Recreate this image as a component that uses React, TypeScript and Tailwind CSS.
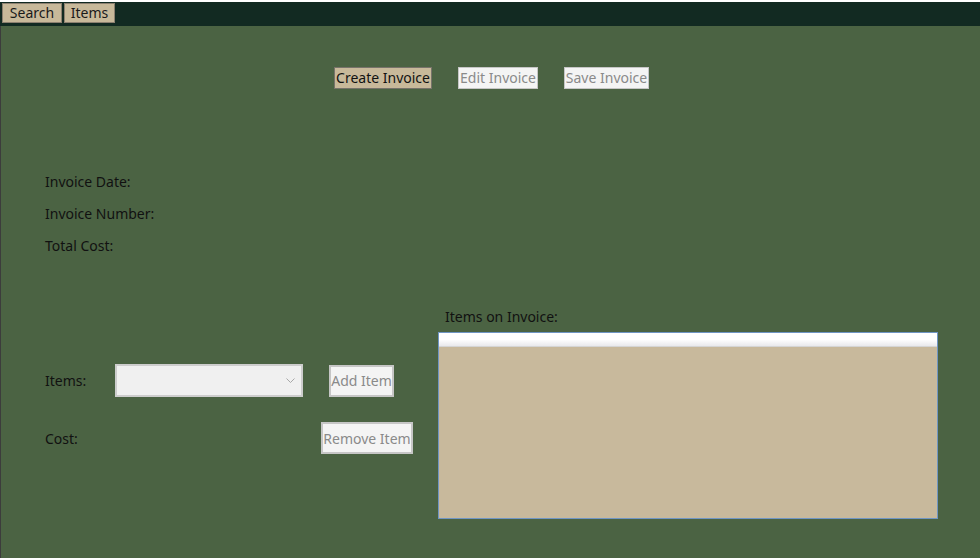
export default function App() {
  const font = { fontFamily: '"Segoe UI", "Noto Sans", "Open Sans", sans-serif' };
  return (
    <div
      className="w-[980px] h-[558px] bg-[#4b6343] overflow-hidden text-[14px] text-[#111111] flex flex-col"
      style={font}
    >
      {/* top menu strip */}
      <div className="h-[26px] border-t-2 border-white bg-[#122a22] flex items-start gap-[2px] pt-px pl-[2px]">
        <button className="h-[20px] w-[60px] bg-[#c8b99a] border border-[#8c8070] leading-[18px] text-[#1a1a1a]">
          Search
        </button>
        <button className="h-[20px] w-[51px] bg-[#c8b99a] border border-[#8c8070] leading-[18px] text-[#1a1a1a]">
          Items
        </button>
      </div>

      <div className="flex-1 border-l border-[#3c3c3c] flex flex-col">
        {/* invoice actions */}
        <div className="mt-[41px] flex pl-[333px]">
          <button className="h-[22px] w-[98px] bg-[#c8b99a] border border-[#77736a] leading-[20px] text-[#111111]">
            Create Invoice
          </button>
          <button className="ml-[26px] h-[22px] w-[80px] bg-[#f4f4f4] border border-[#c6c6c6] leading-[20px] text-[#8a8a8a]">
            Edit Invoice
          </button>
          <button className="ml-[26px] h-[22px] w-[85px] bg-[#f4f4f4] border border-[#c6c6c6] leading-[20px] text-[#8a8a8a]">
            Save Invoice
          </button>
        </div>

        {/* invoice info */}
        <div className="mt-[76px] pl-[44px] flex flex-col">
          <div className="h-[32px] flex items-center">Invoice Date:</div>
          <div className="h-[32px] flex items-center">Invoice Number:</div>
          <div className="h-[32px] flex items-center">Total Cost:</div>
        </div>

        {/* items area */}
        <div className="mt-[40px] flex">
          <div className="w-[437px] flex flex-col">
            <div className="mt-[63px] h-[33px] flex items-center">
              <span className="ml-[44px] w-[70px]">Items:</span>
              <div className="w-[188px] h-[33px] bg-[#f0f0f0] border-2 border-[#cdcdcd] flex items-center justify-end pr-[6px]">
                <svg width="9" height="6" viewBox="0 0 9 6">
                  <path d="M0.5 0.5 L4.5 4.5 L8.5 0.5" fill="none" stroke="#a8a8a8" strokeWidth="1" />
                </svg>
              </div>
              <button className="ml-[26px] h-[32px] w-[65px] bg-[#f4f4f4] border-2 border-[#c6c6c6] text-[#8a8a8a]">
                Add Item
              </button>
            </div>
            <div className="mt-[25px] h-[32px] flex items-center">
              <span className="ml-[44px] w-[276px]">Cost:</span>
              <button className="h-[32px] w-[92px] bg-[#f4f4f4] border-2 border-[#c6c6c6] text-[#8a8a8a] whitespace-nowrap">
                Remove Item
              </button>
            </div>
          </div>
          <div className="flex flex-col">
            <div className="h-[31px] flex items-center pl-[7px]">Items on Invoice:</div>
            <div className="w-[500px] h-[187px] border border-[#6f95c4] bg-[#c8b99c] flex flex-col">
              <div className="h-[14px] bg-gradient-to-b from-white via-white to-[#e9e9ec] border-b border-[#d5d5d5]" />
            </div>
          </div>
        </div>
      </div>
    </div>
  );
}
